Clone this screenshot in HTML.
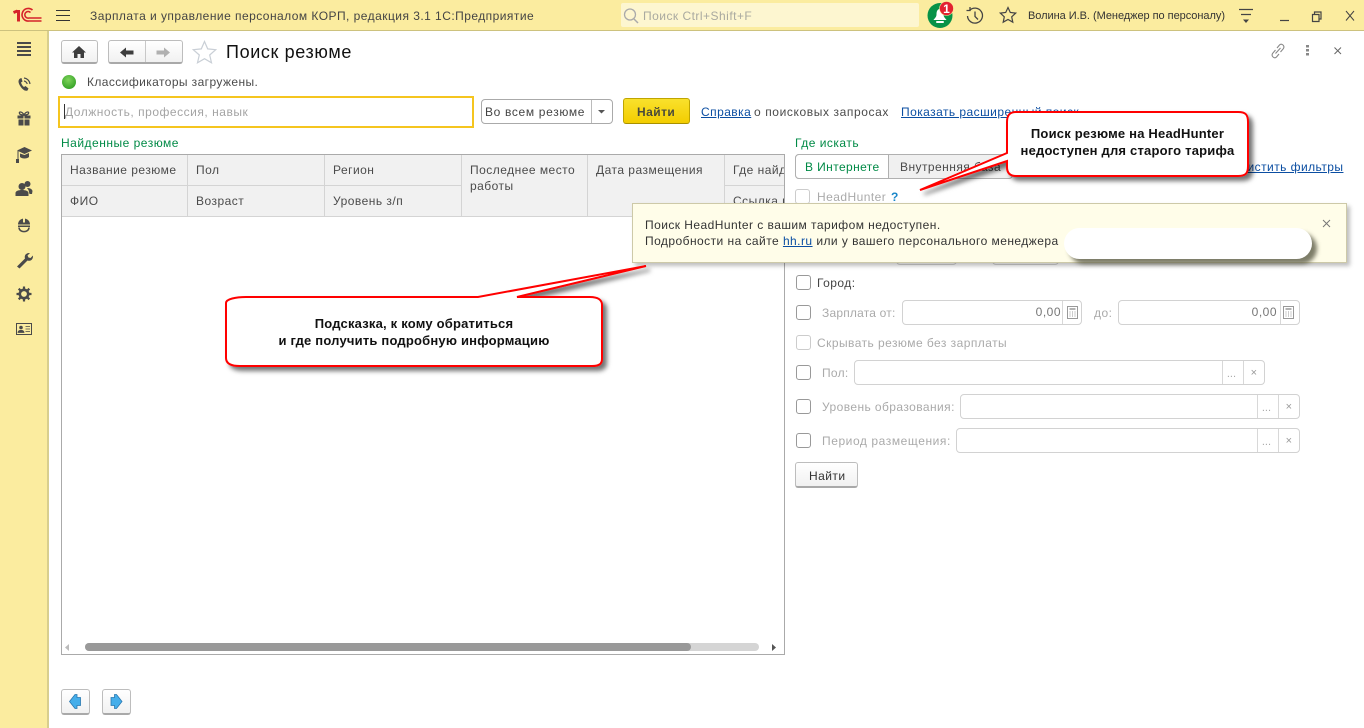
<!DOCTYPE html>
<html lang="ru"><head><meta charset="utf-8"><title>Поиск резюме</title>
<style>
html,body{margin:0;padding:0;width:1364px;height:728px;overflow:hidden;background:#fff}
body{position:relative;font-family:"Liberation Sans",Arial,sans-serif;font-size:12px;color:#4b4b4b}
.t{position:absolute;white-space:nowrap;line-height:16px;letter-spacing:.45px}
.b{position:absolute;box-sizing:border-box}
.g{color:#aaa}.gr{color:#008a46}.l{color:#0b4ea2;text-decoration:underline}
.cb{position:absolute;box-sizing:border-box;width:15px;height:15px;border:1px solid #999;border-radius:3px;background:#fff}
.cb.d{border-color:#ccc}
.f{position:absolute;box-sizing:border-box;height:25px;border:1px solid #d2d2d2;border-radius:4px;background:#fff}
.f i{position:absolute;top:0;bottom:0;width:1px;background:#d8d8d8}
.f span{position:absolute;color:#aaa;font-style:normal;line-height:23px;font-size:11px}
.th{position:absolute;box-sizing:border-box;background:#f1f1f1;border-right:1px solid #d4d4d4;border-bottom:1px solid #d4d4d4;padding:7px 8px;line-height:16px;color:#4b4b4b;letter-spacing:.48px;overflow:hidden;white-space:nowrap}
.btn{position:absolute;box-sizing:border-box;background:linear-gradient(#fff,#f1f1f1);border:1px solid #bdbdbd;border-bottom:2px solid #a9a9a9;border-radius:3px}
svg{position:absolute;overflow:visible}
.c{position:absolute;font-weight:bold;font-size:13px;color:#111;text-align:center;line-height:16.5px;white-space:nowrap;letter-spacing:.2px}
</style></head><body>

<!-- top bar -->
<div class="b" style="left:0;top:0;width:1364px;height:31px;background:#fbec9f;border-bottom:1px solid #cdc27e"></div>
<div class="b" style="left:0;top:31px;width:49px;height:697px;background:#fbec9f;border-right:2px solid #d8ce8e"></div>

<!-- 1C logo -->
<svg style="left:0;top:0" width="48" height="30" viewBox="0 0 48 30">
<g fill="none" stroke="#d5232a">
<path d="M13.500 12.500l4-1.500M18.500 10v11.500" stroke-width="3"/>
<path d="M41.500 21H29a6.300 6.300 0 1 1 3.500-11" stroke-width="1.600"/>
<path d="M41.500 18H29a3.300 3.300 0 1 1 1.500-5.500" stroke-width="1.600"/>
</g></svg>
<svg style="left:56px;top:9px" width="15" height="13"><path d="M0 1.500h14M0 6.500h14M0 11.500h14" stroke="#333" stroke-width="1"/></svg>
<div class="t" style="left:90px;top:8px;color:#444;letter-spacing:.46px">Зарплата и управление персоналом КОРП, редакция 3.1 1С:Предприятие</div>

<!-- search -->
<div class="b" style="left:621px;top:3px;width:298px;height:24px;background:#fdf6d0;border-radius:2px"></div>
<svg style="left:622px;top:7px" width="18" height="18"><circle cx="8" cy="7.500" r="5.500" fill="none" stroke="#aaa" stroke-width="1.300"/><path d="M12 12l4 4" stroke="#aaa" stroke-width="1.500"/></svg>
<div class="t" style="left:643px;top:8px;color:#a9a9a0;letter-spacing:.48px">Поиск Ctrl+Shift+F</div>

<!-- bell -->
<svg style="left:927px;top:2px" width="28" height="26">
<circle cx="13" cy="13.500" r="12.500" fill="#069247"/>
<path d="M13 7c-3 0-3.500 3-3.500 5.500 0 2.500-2 4-3 5.500h13c-1-1.500-3-3-3-5.500C16.500 10 16 7 13 7z" fill="#fff"/>
<rect x="9" y="19" width="8" height="2" rx="1" fill="#fff"/>
<circle cx="19.500" cy="6.500" r="7" fill="#e32230" stroke="#fbec9f" stroke-width=".6"/>
<text x="19.500" y="11" text-anchor="middle" font-family="Liberation Sans" font-weight="bold" font-size="12" fill="#fff">1</text>
</svg>
<!-- history -->
<svg style="left:965px;top:6px" width="20" height="20" fill="none" stroke="#444" stroke-width="1.300"><path d="M4.500 4.500A7.500 7.500 0 1 1 2.500 10"/><path d="M1.500 4.500h3.500V1"/><path d="M10 5.500V10.500l3 3"/></svg>
<!-- star -->
<svg style="left:999px;top:6px" width="18" height="18"><path d="M9 1.500l2.300 5 5.400.6-4 3.700 1.100 5.400L9 13.500l-4.800 2.700 1.100-5.400-4-3.700 5.400-.6z" fill="none" stroke="#444" stroke-width="1.200"/></svg>
<div class="t" style="left:1028px;top:8px;font-size:11px;letter-spacing:-.04px;color:#333">Волина И.В. (Менеджер по персоналу)</div>
<svg style="left:1238px;top:8px" width="18" height="17"><path d="M1 1.500h14M3 6.500h10" stroke="#444" stroke-width="1.200"/><path d="M5 11.500h6l-3 3.500z" fill="#444"/></svg>
<svg style="left:1278px;top:10px" width="76" height="14" fill="none" stroke="#444" stroke-width="1.200">
<path d="M2 10.500h9"/>
<path d="M34.500 4.500h6.500v7h-6.500zM36.500 4.500v-2.500h6.500v7h-2"/>
<path d="M68 1l8 9.500M76 1l-8 9.500" stroke-width="1"/>
</svg>

<!-- sidebar icons -->
<svg style="left:16px;top:41px" width="18" height="16"><path d="M1 2h14M1 6h14M1 10h14M1 14h14" stroke="#4a4a4a" stroke-width="2"/></svg>
<svg style="left:16px;top:76px" width="18" height="18" fill="none"><path d="M4 2.500c-2.500 2-1.500 5 .5 8s4.500 5 7 4l1-2-3-2.500-1.500 1c-1.500-1-2.500-3-3-4.500l1.500-1L5.500 2z" fill="#4a4a4a"/><path d="M8 2c3 .3 5.500 2.500 6 6M8 5c1.500.2 3 1.500 3.200 3" stroke="#4a4a4a" stroke-width="1.200"/></svg>
<svg style="left:16px;top:110px" width="18" height="18"><path d="M1.500 5.500h6v3h-6zM8.500 5.500h6v3h-6zM2.500 9.500h5v6h-5zM8.500 9.500h5v6h-5z" fill="#4a4a4a"/><path d="M8 5C6 1 2.500 1.500 3.500 3.500 4 5 8 5 8 5c0 0 4 0 4.500-1.500C13.500 1.500 10 1 8 5z" fill="none" stroke="#4a4a4a" stroke-width="1.300"/></svg>
<svg style="left:15px;top:146px" width="18" height="18"><path d="M9.500 1L17 4.500l-7.500 3.500L2 4.500z" fill="#4a4a4a"/><path d="M5 7.500v3.500c2 2 7 2 9 0V7l-4.500 2z" fill="#4a4a4a"/><path d="M3 5v9" stroke="#4a4a4a" stroke-width="1"/><rect x="1" y="13" width="3" height="4" fill="#4a4a4a"/></svg>
<svg style="left:15px;top:180px" width="18" height="18" fill="#4a4a4a"><circle cx="7" cy="6.500" r="3.500"/><path d="M0.500 16v-3c0-2 3-3 6.500-3s6.500 1 6.500 3v3z"/><circle cx="12.500" cy="4" r="3"/><path d="M12 8c3 0 5 1 5.500 3l-.5 3h-2.500l-1-4z"/></svg>
<svg style="left:18px;top:217px" width="13" height="16" fill="#4a4a4a"><path d="M0 7.500a6 6 0 0 1 12 0z"/><path d="M5 1.500h2v4H5z" fill="#fbec9f"/><rect x="0" y="8.500" width="12" height="1.500"/><path d="M1 10.500c.3 5.500 9.700 5.500 10 0" fill="none" stroke="#4a4a4a" stroke-width="1.600"/></svg>
<svg style="left:16px;top:251px" width="18" height="18"><path d="M1 15.500l8-8c-1-3 1-6 5-5.500l-2.500 2.500 1 2 2 .5L17 4.500c.3 4-2.500 6-5.500 5l-8 8z" fill="#4a4a4a"/></svg>
<svg style="left:16px;top:286px" width="18" height="18"><circle cx="8" cy="8" r="4.200" fill="none" stroke="#4a4a4a" stroke-width="2.600"/><path d="M8 .5v3M8 12.500v3M.5 8h3M12.500 8h3M2.700 2.700l2 2M11.300 11.300l2 2M13.300 2.700l-2 2M4.700 11.300l-2 2" stroke="#4a4a4a" stroke-width="2.200"/></svg>
<svg style="left:16px;top:323px" width="18" height="14"><rect x=".5" y=".5" width="15" height="11" fill="none" stroke="#4a4a4a"/><circle cx="5" cy="4.500" r="1.800" fill="#4a4a4a"/><path d="M2 9.500c0-3 6-3 6 0zM9.500 3.500h4.500M9.500 6h4.500M9.500 8.500h4.500" fill="#4a4a4a" stroke="#4a4a4a" stroke-width=".8"/></svg>

<!-- nav buttons -->
<div class="btn" style="left:61px;top:40px;width:37px;height:24px"></div>
<svg style="left:72px;top:46px" width="15" height="12"><path d="M7 0L0 6.500h2V12h3.500V8h3v4H12V6.500h2z" fill="#3d3d3d"/></svg>
<div class="btn" style="left:108px;top:40px;width:75px;height:24px"></div>
<div class="b" style="left:145px;top:41px;width:1px;height:21px;background:#c8c8c8"></div>
<svg style="left:120px;top:47px" width="14" height="11"><path d="M0 5.500L6 .5v3h7.500v4H6v3z" fill="#3d3d3d"/></svg>
<svg style="left:156px;top:47px" width="14" height="11"><path d="M14 5.500L8 .5v3H.5v4H8v3z" fill="#b0b0b0"/></svg>
<svg style="left:192px;top:40px" width="25" height="23"><path d="M12.500 1.500l3.200 7.400 8 .8-6 5.300 1.800 7.800-7-4.100-7 4.100 1.800-7.800-6-5.300 8-.8z" fill="#fff" stroke="#c9cfd6" stroke-width="1.200"/></svg>
<div class="t" style="left:226px;top:42px;font-size:18px;line-height:20px;color:#111;letter-spacing:.63px">Поиск резюме</div>

<svg style="left:1270px;top:43px" width="16" height="16" fill="none" stroke="#888" stroke-width="1.100"><path d="M5.500 10.500l5-5.500M7 5l2.500-3c2-2 5.500.5 4 3.500l-3 3.500M9 11l-2.500 3c-2 2-5.500-.5-4-3.500l3-3.500"/></svg>
<svg style="left:1306px;top:45px" width="4" height="11" fill="#888"><rect x="0" y="0" width="3" height="2.500"/><rect x="0" y="4" width="3" height="2.500"/><rect x="0" y="8" width="3" height="2.500"/></svg>
<svg style="left:1334px;top:47px" width="8" height="8"><path d="M.5.5l6.500 6.500M7 .5l-6.500 6.500" stroke="#666" stroke-width="1"/></svg>

<!-- status -->
<div class="b" style="left:62px;top:75px;width:14px;height:14px;border-radius:50%;background:radial-gradient(circle at 45% 35%,#7ed35a,#38a429 75%)"></div>
<div class="t" style="left:87px;top:74px;letter-spacing:.41px">Классификаторы загружены.</div>

<!-- search row -->
<div class="b" style="left:58px;top:96px;width:416px;height:32px;border:2px solid #f5c51f;background:#fff"></div>
<div class="b" style="left:64px;top:104px;width:1px;height:15px;background:#333"></div>
<div class="t" style="left:65px;top:104px;color:#a4a4a4;letter-spacing:.52px">Должность, профессия, навык</div>
<div class="b" style="left:481px;top:99px;width:132px;height:25px;border:1px solid #aaa;border-radius:4px;background:#fff"></div>
<div class="b" style="left:591px;top:100px;width:1px;height:23px;background:#bbb"></div>
<div class="t" style="left:485px;top:104px;color:#444;letter-spacing:.66px">Во всем резюме</div>
<svg style="left:598px;top:110px" width="8" height="5"><path d="M0 0h7l-3.500 3.500z" fill="#555"/></svg>
<div class="b" style="left:623px;top:98px;width:67px;height:26px;border:1px solid #bfa500;border-bottom-color:#a89000;border-radius:3px;background:linear-gradient(#f9e12c,#f3cd00)"></div>
<div class="t" style="left:637px;top:104px;font-weight:bold;color:#4a4a3a">Найти</div>
<div class="t l" style="left:701px;top:104px">Справка</div>
<div class="t" style="left:754px;top:104px;letter-spacing:.6px">о поисковых запросах</div>
<div class="t l" style="left:901px;top:104px">Показать расширенный поиск</div>

<!-- table -->
<div class="t gr" style="left:61px;top:135px;letter-spacing:.5px">Найденные резюме</div>
<div class="b" style="left:61px;top:154px;width:724px;height:501px;border:1px solid #aaa;background:#fff"></div>
<div class="b" style="left:62px;top:155px;width:722px;height:62px;overflow:hidden;border-bottom:1px solid #d4d4d4">
<div class="th" style="left:0;top:0;width:126px;height:31px">Название резюме</div>
<div class="th" style="left:0;top:31px;width:126px;height:31px">ФИО</div>
<div class="th" style="left:126px;top:0;width:137px;height:31px">Пол</div>
<div class="th" style="left:126px;top:31px;width:137px;height:31px">Возраст</div>
<div class="th" style="left:263px;top:0;width:137px;height:31px">Регион</div>
<div class="th" style="left:263px;top:31px;width:137px;height:31px">Уровень з/п</div>
<div class="th" style="left:400px;top:0;width:126px;height:62px">Последнее место<br>работы</div>
<div class="th" style="left:526px;top:0;width:137px;height:62px">Дата размещения</div>
<div class="th" style="left:663px;top:0;width:60px;height:31px">Где найдено</div>
<div class="th" style="left:663px;top:31px;width:60px;height:31px">Ссылка на</div>
</div>
<!-- scrollbar -->
<svg style="left:64px;top:644px" width="6" height="7"><path d="M5 0v7L1 3.500z" fill="#bbb"/></svg>
<div class="b" style="left:85px;top:643px;width:674px;height:8px;background:#d5d5d5;border-radius:4px"></div>
<div class="b" style="left:85px;top:643px;width:606px;height:8px;background:#999;border-radius:4px"></div>
<svg style="left:771px;top:644px" width="6" height="7"><path d="M1 0v7l4-3.500z" fill="#555"/></svg>

<!-- bottom nav -->
<div class="btn" style="left:61px;top:689px;width:29px;height:26px"></div>
<div class="btn" style="left:102px;top:689px;width:29px;height:26px"></div>
<svg style="left:69px;top:694px" width="13" height="15"><path d="M.5 7.500L6 .5h2v3h3.500v8H8v3H6z" fill="#45aeea" stroke="#2a78b0" stroke-width=".8"/></svg>
<svg style="left:110px;top:694px" width="13" height="15"><path d="M12 7.500L6.500.5h-2v3H1v8h3.500v3h2z" fill="#45aeea" stroke="#2a78b0" stroke-width=".8"/></svg>

<!-- right panel -->
<div class="t gr" style="left:795px;top:135px;letter-spacing:.5px">Где искать</div>
<div class="b" style="left:795px;top:154px;width:218px;height:25px;border:1px solid #b0b0b0;border-radius:4px;background:#f0f0f0"></div>
<div class="b" style="left:795px;top:154px;width:94px;height:25px;border:1px solid #b0b0b0;border-radius:4px 0 0 4px;background:#fff"></div>
<div class="t gr" style="left:805px;top:159px;letter-spacing:.4px">В Интернете</div>
<div class="t" style="left:900px;top:159px">Внутренняя база</div>
<div class="t l" style="left:1231px;top:159px">Очистить фильтры</div>
<div class="cb d" style="left:795px;top:189px"></div>
<div class="t g" style="left:817px;top:189px">HeadHunter</div>
<div class="t" style="left:891px;top:189px;color:#1a87c9;font-weight:bold">?</div>

<!-- fields hidden behind the tooltip -->
<div class="b" style="left:896px;top:240px;width:61px;height:25px;border:1px solid #d2d2d2;border-radius:4px"></div>
<div class="b" style="left:992px;top:240px;width:67px;height:25px;border:1px solid #d2d2d2;border-radius:4px"></div>

<div class="cb" style="left:796px;top:275px"></div>
<div class="t" style="left:817px;top:275px;color:#444">Город:</div>

<div class="cb" style="left:796px;top:305px"></div>
<div class="t g" style="left:822px;top:305px;letter-spacing:.2px">Зарплата от:</div>
<div class="f" style="left:902px;top:300px;width:180px"><i style="right:18px"></i><span style="right:20px;color:#777;font-size:12px;letter-spacing:.5px">0,00</span></div>
<div class="t g" style="left:1094px;top:305px">до:</div>
<div class="f" style="left:1118px;top:300px;width:182px"><i style="right:18px"></i><span style="right:22px;color:#777;font-size:12px;letter-spacing:.5px">0,00</span></div>
<svg style="left:1067px;top:306px" width="11" height="13"><rect x=".5" y=".5" width="10" height="12" fill="none" stroke="#999"/><path d="M2.500 3h6" stroke="#999" stroke-width="1.500"/><path d="M2.500 6h1M5 6h1M7.500 6h1M2.500 8h1M5 8h1M7.500 8h1M2.500 10h1M5 10h1M7.500 10h1" stroke="#999"/></svg>
<svg style="left:1283px;top:306px" width="11" height="13"><rect x=".5" y=".5" width="10" height="12" fill="none" stroke="#999"/><path d="M2.500 3h6" stroke="#999" stroke-width="1.500"/><path d="M2.500 6h1M5 6h1M7.500 6h1M2.500 8h1M5 8h1M7.500 8h1M2.500 10h1M5 10h1M7.500 10h1" stroke="#999"/></svg>

<div class="cb d" style="left:796px;top:335px"></div>
<div class="t g" style="left:817px;top:335px">Скрывать резюме без зарплаты</div>

<div class="cb" style="left:796px;top:365px"></div>
<div class="t g" style="left:822px;top:365px;letter-spacing:.3px">Пол:</div>
<div class="f" style="left:854px;top:360px;width:411px"><i style="right:41px"></i><i style="right:20px"></i><span style="right:28px;top:2px">...</span><span style="right:7px;top:1px;color:#999">×</span></div>

<div class="cb" style="left:796px;top:399px"></div>
<div class="t g" style="left:822px;top:399px;letter-spacing:.42px">Уровень образования:</div>
<div class="f" style="left:960px;top:394px;width:340px"><i style="right:41px"></i><i style="right:20px"></i><span style="right:28px;top:2px">...</span><span style="right:7px;top:1px;color:#999">×</span></div>

<div class="cb" style="left:796px;top:433px"></div>
<div class="t g" style="left:822px;top:433px;letter-spacing:.57px">Период размещения:</div>
<div class="f" style="left:956px;top:428px;width:344px"><i style="right:41px"></i><i style="right:20px"></i><span style="right:28px;top:2px">...</span><span style="right:7px;top:1px;color:#999">×</span></div>

<div class="btn" style="left:795px;top:462px;width:63px;height:26px"></div>
<div class="t" style="left:809px;top:468px;color:#333">Найти</div>

<!-- tooltip -->
<div class="b" style="left:632px;top:203px;width:715px;height:60px;background:#fffde9;border:1px solid #cdc9a8;box-shadow:3px 3px 4px rgba(0,0,0,.25)"></div>
<div class="t" style="left:645px;top:217px;color:#333">Поиск HeadHunter с вашим тарифом недоступен.</div>
<div class="t" style="left:645px;top:233px;color:#333">Подробности на сайте <span class="l">hh.ru</span> или у вашего персонального менеджера</div>
<svg style="left:1322px;top:219px" width="9" height="9"><path d="M1 1l7 7M8 1l-7 7" stroke="#777" stroke-width="1"/></svg>
<div class="b" style="left:1064px;top:228px;width:248px;height:31px;background:#fff;border-radius:16px;box-shadow:5px 5px 4px rgba(70,70,50,.7)"></div>

<!-- callouts -->
<svg style="left:0;top:0" width="1364" height="728">
<defs><filter id="s" x="-10%" y="-10%" width="125%" height="130%"><feDropShadow dx="4" dy="4" stdDeviation="2.500" flood-color="#000" flood-opacity=".55"/></filter></defs>
<path d="M1016 112h222c8 0 10 3 10 10v44c0 7-2 10-10 10h-222c-6 0-9-3-9-9v-6l-87 29 87-37v-31c0-7 3-10 9-10z" fill="#fff" stroke="#f00" stroke-width="2" filter="url(#s)"/>
<path d="M226 303c0-4 10-6 20-6h232l168-31-129 31h73c8 0 12 3 12 8v54c0 5-3 7-10 7H240c-10 0-14-3-14-8z" fill="#fff" stroke="#f00" stroke-width="2" filter="url(#s)"/>
</svg>
<div class="c" style="left:1007px;top:126px;width:241px">Поиск резюме на HeadHunter<br>недоступен для старого тарифа</div>
<div class="c" style="left:226px;top:316px;width:376px">Подсказка, к кому обратиться<br>и где получить подробную информацию</div>

</body></html>
